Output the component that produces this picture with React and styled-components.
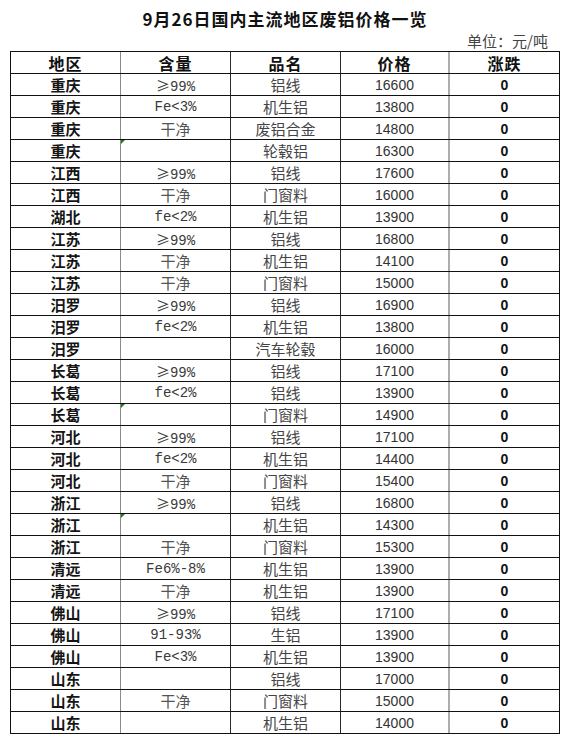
import React from "react";
import styled, { createGlobalStyle } from "styled-components";

const GlobalStyle = createGlobalStyle`
  body {
    margin: 0;
    background: #fff;
    font-family: "Noto Sans CJK SC", "Liberation Sans", sans-serif;
  }
`;

const Page = styled.div`
  width: 550px;
  margin-left: 10px;
  padding-top: 7px;
`;

const Title = styled.h1`
  margin: 0;
  height: 24px;
  line-height: 24px;
  text-align: center;
  font-size: 17px;
  font-weight: 700;
  letter-spacing: 1px;
  color: #111;
`;

const Unit = styled.div`
  height: 20px;
  line-height: 20px;
  text-align: right;
  padding-right: 12px;
  font-size: 15px;
  color: #444;
`;

const Sheet = styled.div`
  border: 1px solid #111;
  box-sizing: border-box;
`;

const Row = styled.div`
  display: grid;
  grid-template-columns: 110px 110px 110px 109px 1fr;
  height: 22px;
  box-sizing: border-box;
  border-bottom: 1px solid #111;

  &:last-child {
    border-bottom: none;
    height: 21px;
  }
`;

const lineColor = {
  grey: "1.5px solid #8a8a8a",
  dark: "1px solid #2a2a2a",
  light: "2px solid #adadad",
  none: "none",
};

const Cell = styled.div`
  position: relative;
  display: flex;
  align-items: center;
  justify-content: center;
  border-right: ${(p) => lineColor[p.$line || "dark"]};
  white-space: nowrap;
  overflow: hidden;
`;

const HeadText = styled.span`
  font-size: 16px;
  font-weight: 700;
  color: #111;
  letter-spacing: 1px;
`;

const Region = styled.span`
  font-size: 15px;
  font-weight: 700;
  color: #151515;
`;

const Grade = styled.span`
  font-family: "Liberation Mono", "Noto Sans CJK SC", monospace;
  font-size: 14px;
  color: #3a3a3a;
`;

const Gte = styled.span`
  font-family: "Noto Sans CJK SC", sans-serif;
  font-size: 14px;
`;

const CleanText = styled.span`
  font-size: 15px;
  color: #555;
`;

const Product = styled.span`
  font-size: 15px;
  color: #444;
`;

const Price = styled.span`
  font-family: "Liberation Sans", Arial, sans-serif;
  font-size: 14px;
  color: #333;
`;

const Change = styled.span`
  font-family: "Liberation Sans", Arial, sans-serif;
  font-size: 14px;
  font-weight: 700;
  color: #111;
`;

const ErrorMark = styled.span`
  position: absolute;
  top: 0;
  left: 0;
  width: 0;
  height: 0;
  border-top: 4px solid #1f7a1f;
  border-right: 4px solid transparent;
`;

const rows = [
  ["重庆", "≥99%", "铝线", "16600"],
  ["重庆", "Fe<3%", "机生铝", "13800"],
  ["重庆", "干净", "废铝合金", "14800"],
  ["重庆", "", "轮毂铝", "16300"],
  ["江西", "≥99%", "铝线", "17600"],
  ["江西", "干净", "门窗料", "16000"],
  ["湖北", "fe<2%", "机生铝", "13900"],
  ["江苏", "≥99%", "铝线", "16800"],
  ["江苏", "干净", "机生铝", "14100"],
  ["江苏", "干净", "门窗料", "15000"],
  ["汨罗", "≥99%", "铝线", "16900"],
  ["汨罗", "fe<2%", "机生铝", "13800"],
  ["汨罗", "", "汽车轮毂", "16000"],
  ["长葛", "≥99%", "铝线", "17100"],
  ["长葛", "fe<2%", "铝线", "13900"],
  ["长葛", "", "门窗料", "14900"],
  ["河北", "≥99%", "铝线", "17100"],
  ["河北", "fe<2%", "机生铝", "14400"],
  ["河北", "干净", "门窗料", "15400"],
  ["浙江", "≥99%", "铝线", "16800"],
  ["浙江", "", "机生铝", "14300"],
  ["浙江", "干净", "门窗料", "15300"],
  ["清远", "Fe6%-8%", "机生铝", "13900"],
  ["清远", "干净", "机生铝", "13900"],
  ["佛山", "≥99%", "铝线", "17100"],
  ["佛山", "91-93%", "生铝", "13900"],
  ["佛山", "Fe<3%", "机生铝", "13900"],
  ["山东", "", "铝线", "17000"],
  ["山东", "干净", "门窗料", "15000"],
  ["山东", "", "机生铝", "14000"],
];

// rows whose blank grade cell carries the spreadsheet's green marker
const marked = [3, 15, 20];

const headers = ["地区", "含量", "品名", "价格", "涨跌"];
const lines = ["grey", "dark", "dark", "light", "none"];

function GradeText({ value }) {
  if (value === "干净") return <CleanText>{value}</CleanText>;
  if (value.startsWith("≥")) {
    return (
      <Grade>
        <Gte>≥</Gte>
        {value.slice(1)}
      </Grade>
    );
  }
  return <Grade>{value}</Grade>;
}

export default function App() {
  return (
    <>
      <GlobalStyle />
      <Page>
        <Title>9月26日国内主流地区废铝价格一览</Title>
        <Unit>单位：元/吨</Unit>
        <Sheet>
          <Row>
            {headers.map((h, i) => (
              <Cell key={h} $line={lines[i]}>
                <HeadText>{h}</HeadText>
              </Cell>
            ))}
          </Row>
          {rows.map(([region, grade, product, price], i) => (
            <Row key={i}>
              <Cell $line="grey">
                <Region>{region}</Region>
              </Cell>
              <Cell>
                {marked.includes(i) && <ErrorMark />}
                <GradeText value={grade} />
              </Cell>
              <Cell>
                <Product>{product}</Product>
              </Cell>
              <Cell $line="light">
                <Price>{price}</Price>
              </Cell>
              <Cell $line="none">
                <Change>0</Change>
              </Cell>
            </Row>
          ))}
        </Sheet>
      </Page>
    </>
  );
}
